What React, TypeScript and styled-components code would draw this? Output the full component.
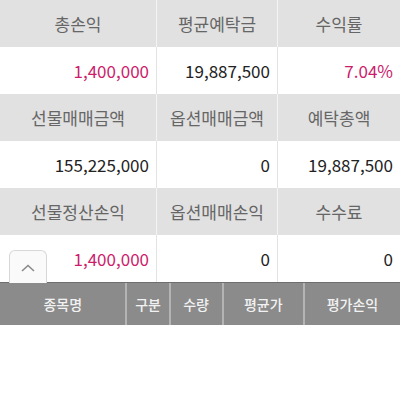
import styled, { createGlobalStyle } from 'styled-components';

const GlobalStyle = createGlobalStyle`
  html, body {
    margin: 0;
    padding: 0;
    background: #ffffff;
  }
  body {
    font-family: "Noto Sans CJK KR", "Noto Sans", sans-serif;
  }
`;

type Cell = { label: string; value: string; pink?: boolean };

const sections: Cell[][] = [
  [
    { label: '총손익', value: '1,400,000', pink: true },
    { label: '평균예탁금', value: '19,887,500' },
    { label: '수익률', value: '7.04%', pink: true },
  ],
  [
    { label: '선물매매금액', value: '155,225,000' },
    { label: '옵션매매금액', value: '0' },
    { label: '예탁총액', value: '19,887,500' },
  ],
  [
    { label: '선물정산손익', value: '1,400,000', pink: true },
    { label: '옵션매매손익', value: '0' },
    { label: '수수료', value: '0' },
  ],
];

const columns = [
  { name: '종목명', width: 128 },
  { name: '구분', width: 42 },
  { name: '수량', width: 52 },
  { name: '평균가', width: 81 },
  { name: '평가손익', width: 97 },
];

const App = () => {
  return (
    <Page>
      <GlobalStyle />
      <Summary>
        {sections.map((row, i) => (
          <Section key={i}>
            {row.map((c) => (
              <Label key={c.label}>{c.label}</Label>
            ))}
            {row.map((c) => (
              <Value key={c.label} $pink={c.pink}>
                {c.value}
              </Value>
            ))}
          </Section>
        ))}
        <UpTab>
          <svg width="14" height="8" viewBox="0 0 14 8">
            <path d="M1 7 L7 1.5 L13 7" fill="none" stroke="#8a8a8a" strokeWidth="1.6" />
          </svg>
        </UpTab>
      </Summary>
      <ListHeader>
        {columns.map((col) => (
          <HeaderCell key={col.name} $width={col.width}>
            {col.name}
          </HeaderCell>
        ))}
      </ListHeader>
    </Page>
  );
};

const Page = styled.div`
  width: 400px;
  height: 400px;
  overflow: hidden;
  background: #fff;
`;

const Summary = styled.div`
  position: relative;
`;

const Section = styled.div`
  display: grid;
  grid-template-columns: 157px 121px 1fr;
  grid-template-rows: 47px 47px;
`;

const Label = styled.div`
  display: flex;
  align-items: center;
  justify-content: center;
  background: #e1e1e1;
  color: #666;
  font-size: 17px;
  border-right: 1px solid #f4f4f4;
  &:nth-child(3) {
    border-right: none;
  }
`;

const Value = styled.div<{ $pink?: boolean }>`
  display: flex;
  align-items: center;
  justify-content: flex-end;
  padding-right: 7px;
  background: #fff;
  color: ${(p) => (p.$pink ? '#cc1c6c' : '#222')};
  font-size: 17px;
  border-right: 1px solid #e2e2e2;
  &:nth-child(6) {
    border-right: none;
  }
`;

const UpTab = styled.div`
  position: absolute;
  left: 9px;
  bottom: -1px;
  width: 38px;
  height: 33px;
  box-sizing: border-box;
  border: 1px solid #d8d8d8;
  border-bottom: none;
  border-radius: 6px 6px 0 0;
  background: #fafafa;
  display: flex;
  align-items: center;
  justify-content: center;
  padding-top: 2px;
`;

const ListHeader = styled.div`
  display: flex;
  height: 43px;
  background: #8b8b8b;
  border-top: 1px solid #6e6e6e;
  box-sizing: border-box;
`;

const HeaderCell = styled.div<{ $width: number }>`
  width: ${(p) => p.$width}px;
  display: flex;
  align-items: center;
  justify-content: center;
  color: #f2f2f2;
  font-size: 14px;
  font-weight: 500;
  border-right: 2px solid #b4b4b4;
  &:last-child {
    border-right: none;
  }
`;

export default App;
